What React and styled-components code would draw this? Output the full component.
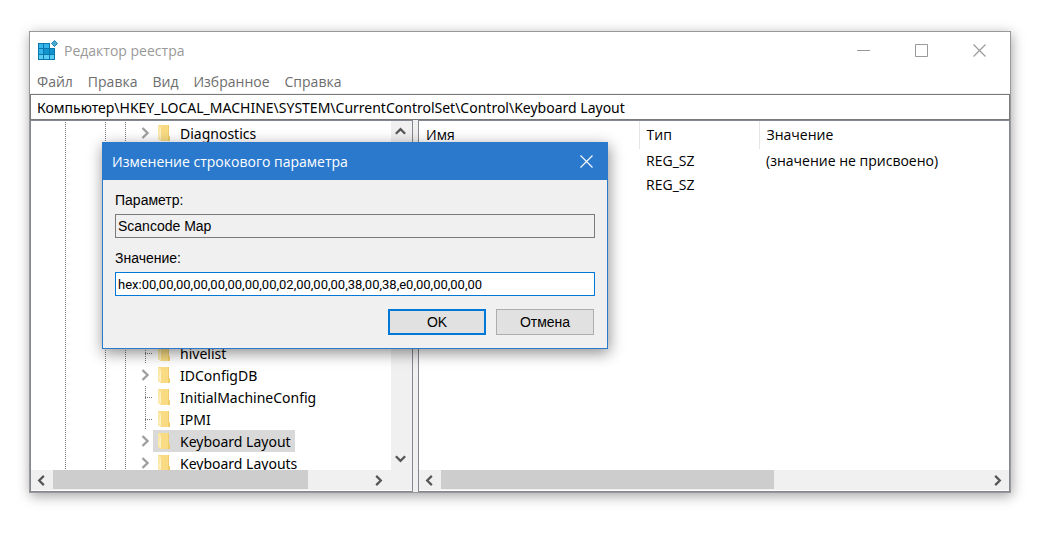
import React, {useState} from "react";
import styled, {createGlobalStyle, css} from "styled-components";

const uiFont = `"Open Sans", "Noto Sans", sans-serif`;
const treeFont = `"Noto Sans", "Open Sans", sans-serif`;
const dialogFont = `"Liberation Sans", Arial, sans-serif`;
const valueFont = `Roboto, "Liberation Sans", sans-serif`;

const GlobalStyle = createGlobalStyle`
  * {
    box-sizing: border-box;
  }
  body {
    margin: 0;
    background: #fff;
    font-family: ${uiFont};
    font-size: 14px;
    color: #000;
  }
  button, input {
    font: inherit;
    color: inherit;
    margin: 0;
    outline: none;
  }
`

const Desktop = styled.div`
  display: flex;
  min-height: 100vh;
  padding: 31px 41px 47px 29px;
`

const Window = styled.div`
  position: relative;
  display: flex;
  flex-direction: column;
  flex: 1;
  min-width: 0;
  border: 1px solid #999;
  background: #fff;
  box-shadow: 1px 3px 12px rgba(0, 0, 0, 0.36);
`

const TitleBar = styled.header`
  display: flex;
  align-items: center;
  height: 38px;
  padding: 0 2px 2px 8px;
`

const Title = styled.h1`
  flex: 1;
  margin: 0 0 0 5px;
  font-size: 14px;
  font-weight: normal;
  color: #999;
`

const IconButton = styled.button`
  display: flex;
  align-items: center;
  justify-content: center;
  width: ${p => p.$width}px;
  height: 36px;
  padding: 0;
  border: none;
  background: none;
  color: ${p => p.$color};
`

const Menu = styled.nav`
  display: flex;
  gap: 15px;
  height: 24px;
  padding: 0 7px;
  border-bottom: 1px solid #f0f0f0;
`

const MenuItem = styled.button`
  padding: 0;
  border: none;
  background: none;
  line-height: 23px;
  color: #6d6d6d;
`

const Address = styled.input`
  width: 100%;
  height: 26px;
  padding: 0 6px;
  border: 1px solid #7a7a7a;
  background: #fff;
  font-family: ${treeFont};
`

const Panes = styled.div`
  flex: 1;
  min-height: 0;
  display: grid;
  grid-template-columns: 11fr 17fr;
  gap: 5px;
  background: #f0f0f0;
`

const Pane = styled.section`
  display: flex;
  flex-direction: column;
  min-width: 0;
  border: 1px solid #828790;
  padding-bottom: 1px;
  background: #fff;
`

const PaneBody = styled.div`
  flex: 1;
  display: flex;
  min-height: 0;
`

const Tree = styled.ul`
  flex: 1 1 0;
  height: 349px;
  margin: 0;
  padding: 1px 0 0;
  overflow: hidden;
  list-style: none;
  font-family: ${treeFont};
`

const dots = `repeating-linear-gradient(#777 0 1px, transparent 1px 2px)`;

const TreeRow = styled.li`
  display: flex;
  height: 22px;
  padding-left: 34px;
`

const Guide = styled.span`
  width: ${p => p.$width}px;
  background: ${dots} left / 1px 100% no-repeat;
`

const Branch = styled.span`
  display: flex;
  align-items: center;
  width: 8px;
  ${p => !p.$open && css`
    background:
      ${dots} left / 1px 100% no-repeat,
      repeating-linear-gradient(90deg, #777 0 1px, transparent 1px 2px) left / 100% 1px no-repeat;
  `}
`

const Expander = styled.button`
  display: flex;
  flex: none;
  margin-left: -7px;
  padding: 0;
  border: none;
  background: none;
  color: #a0a0a0;
`

const Key = styled.span`
  display: flex;
  align-items: center;
  gap: 9px;
  padding: 0 4px 0 5px;
  white-space: nowrap;
  background: ${p => p.$selected ? "#d9d9d9" : "transparent"};
`

const ScrollTrack = styled.div`
  display: flex;
  flex: none;
  flex-direction: ${p => p.$vertical ? "column" : "row"};
  justify-content: space-between;
  ${p => p.$vertical ? "width: 21px; padding-bottom: 2px;" : "height: 20px;"}
  background: #f0f0f0;
`

const ScrollButton = styled.button`
  display: flex;
  flex: none;
  align-items: center;
  justify-content: center;
  width: ${p => p.$narrow ? 20 : 22}px;
  height: 20px;
  padding: 0 2px 0 0;
  border: none;
  background: none;
  color: #555;
`

const ScrollRange = styled.div`
  flex: 1;
`

const ScrollThumb = styled.div`
  width: ${p => p.$size}%;
  height: 19px;
  background: #cdcdcd;
`

const Corner = styled.div`
  width: ${p => p.$size}px;
`

const Values = styled.table`
  width: 100%;
  table-layout: fixed;
  border-collapse: collapse;
  align-self: flex-start;

  th, td {
    height: 24px;
    padding: 0 7px;
    font-weight: normal;
    line-height: 20px;
    text-align: left;
    white-space: nowrap;
  }
  th {
    height: 28px;
    border-left: 1px solid #e5e5e5;
  }
  th:first-child {
    border-left: none;
  }
`

const Dialog = styled.form`
  position: absolute;
  left: 72px;
  top: 110px;
  width: 506px;
  border: 1px solid #2a79cd;
  background: #f0f0f0;
  font-family: ${dialogFont};
  box-shadow: 1px 4px 14px rgba(0, 0, 0, 0.45);
`

const DialogTitle = styled.div`
  display: flex;
  align-items: center;
  justify-content: space-between;
  height: 37px;
  padding-left: 9px;
  background: #2a79cd;
  font-family: ${uiFont};
  color: #fff;
`

const DialogBody = styled.div`
  display: flex;
  flex-direction: column;
  padding: 10px 12px 13px;
`

const Label = styled.label`
  height: 24px;
  line-height: 20px;
`

const Field = styled.input`
  height: 24px;
  margin-bottom: 10px;
  padding: 0 2px;
  border: 1px solid ${p => p.readOnly ? "#7a7a7a" : "#0078d7"};
  background: ${p => p.readOnly ? "#f0f0f0" : "#fff"};
  ${p => p.$narrow && css`
    font-family: ${valueFont};
    font-size: 13px;
  `}
`

const Actions = styled.div`
  display: flex;
  justify-content: flex-end;
  gap: 10px;
  padding: 3px 1px 0 0;
`

const ActionButton = styled.button`
  width: 98px;
  height: 26px;
  padding: 0;
  border: ${p => p.$primary ? "2px solid #0078d7" : "1px solid #adadad"};
  background: #e1e1e1;
`

const paths = {
    left: "M9.5 2 L4.5 7 L9.5 12",
    right: "M4.5 2 L9.5 7 L4.5 12",
    up: "M2 9.5 L7 4.5 L12 9.5",
    down: "M2 4.5 L7 9.5 L12 4.5"
}

const Arrow = ({to, size = 13}) => (
    <svg width={size} height={size} viewBox="0 0 14 14" fill="none" stroke="currentColor" strokeWidth="2.4">
        <path d={paths[to]}/>
    </svg>
)

const Cross = () => (
    <svg width="13" height="13" viewBox="0 0 13 13" stroke="currentColor" strokeWidth="1.1">
        <path d="M.5 .5 L12.5 12.5 M12.5 .5 L.5 12.5"/>
    </svg>
)

const Folder = () => (
    <svg width="13" height="18" viewBox="0 0 13 18">
        <path d="M0 1h11v11l1 1v4H3L0 15z" fill="#f8db83"/>
        <path d="M0 1l3 2v14L0 15z" fill="#fbe8a6"/>
        <path d="M10 1h1v11l1 1v4h-2z" fill="#f0cc68"/>
        <path d="M1 12l2 5V3z" fill="#fdf1c8"/>
    </svg>
)

const RegistryIcon = () => (
    <svg width="21" height="20" viewBox="0 0 21 20">
        <path d="M0 3h12v5h5v12H0z" fill="#0b78ad"/>
        <path d="M1 4h4v4H1zM6 4h5v4H6zM1 9h4v5H1z" fill="#35b5ea"/>
        <path d="M6 9h5v5H6zM12 9h4v5h-4z" fill="#1193cd"/>
        <path d="M1 15h4v4H1zM6 15h5v4H6zM12 15h4v4h-4z" fill="#5bcdf5"/>
        <path d="M16.500 .5 L19.500 3.500 L16.500 6.500 L13.500 3.500z" fill="#4aaad4" stroke="#2585b3"/>
    </svg>
)

const hiddenRows = Array.from({length: 9}, () => ({name: "", hidden: true}));

const keys = [
    {name: "Diagnostics", open: true},
    ...hiddenRows,
    {name: "hivelist"},
    {name: "IDConfigDB", open: true},
    {name: "InitialMachineConfig"},
    {name: "IPMI"},
    {name: "Keyboard Layout", open: true},
    {name: "Keyboard Layouts", open: true}
]

const HorizontalScroll = ({thumb, corner = 0}) => (
    <ScrollTrack>
        <ScrollButton aria-label="Влево"><Arrow to="left"/></ScrollButton>
        <ScrollRange><ScrollThumb $size={thumb}/></ScrollRange>
        <ScrollButton aria-label="Вправо"><Arrow to="right"/></ScrollButton>
        <Corner $size={corner}/>
    </ScrollTrack>
)

const KeyTree = () => {
    const [selected, setSelected] = useState("Keyboard Layout")

    return (
        <Pane>
            <PaneBody>
                <Tree>
                    {keys.map((key, i) => (
                        <TreeRow key={i}>
                            <Guide $width={40}/>
                            <Guide $width={20}/>
                            <Guide $width={20}/>
                            <Branch $open={key.open}>
                                {key.open && <Expander aria-label={key.name}><Arrow to="right" size={14}/></Expander>}
                            </Branch>
                            {!key.hidden &&
                                <Key $selected={key.name === selected} onClick={() => setSelected(key.name)}>
                                    <Folder/>
                                    {key.name}
                                </Key>}
                        </TreeRow>
                    ))}
                </Tree>
                <ScrollTrack $vertical>
                    <ScrollButton $narrow aria-label="Вверх"><Arrow to="up"/></ScrollButton>
                    <ScrollButton $narrow aria-label="Вниз"><Arrow to="down"/></ScrollButton>
                </ScrollTrack>
            </PaneBody>
            <HorizontalScroll thumb={81} corner={22}/>
        </Pane>
    )
}

const ValueList = () => (
    <Pane>
        <PaneBody>
            <Values>
                <colgroup>
                    <col style={{width: "220px"}}/>
                    <col style={{width: "120px"}}/>
                    <col/>
                </colgroup>
                <thead>
                    <tr>
                        <th>Имя</th>
                        <th>Тип</th>
                        <th>Значение</th>
                    </tr>
                </thead>
                <tbody>
                    <tr>
                        <td/>
                        <td>REG_SZ</td>
                        <td>(значение не присвоено)</td>
                    </tr>
                    <tr>
                        <td/>
                        <td>REG_SZ</td>
                        <td/>
                    </tr>
                </tbody>
            </Values>
        </PaneBody>
        <HorizontalScroll thumb={61}/>
    </Pane>
)

const EditDialog = () => {
    const [value, setValue] = useState("hex:00,00,00,00,00,00,00,00,02,00,00,00,38,00,38,e0,00,00,00,00")

    return (
        <Dialog onSubmit={e => e.preventDefault()}>
            <DialogTitle>
                Изменение строкового параметра
                <IconButton type="button" $width={42} $color="#fff" aria-label="Закрыть"><Cross/></IconButton>
            </DialogTitle>
            <DialogBody>
                <Label htmlFor="param">Параметр:</Label>
                <Field id="param" readOnly value="Scancode Map"/>
                <Label htmlFor="value">Значение:</Label>
                <Field id="value" $narrow value={value} onChange={e => setValue(e.target.value)}/>
                <Actions>
                    <ActionButton $primary>OK</ActionButton>
                    <ActionButton type="button">Отмена</ActionButton>
                </Actions>
            </DialogBody>
        </Dialog>
    )
}

export default function App() {
    const [path, setPath] = useState("Компьютер\\HKEY_LOCAL_MACHINE\\SYSTEM\\CurrentControlSet\\Control\\Keyboard Layout")

    return (
        <Desktop>
            <GlobalStyle/>
            <Window>
                <TitleBar>
                    <RegistryIcon/>
                    <Title>Редактор реестра</Title>
                    <IconButton $width={58} $color="#999" aria-label="Свернуть">
                        <svg width="13" height="13" stroke="currentColor"><path d="M0 6.500 H13"/></svg>
                    </IconButton>
                    <IconButton $width={58} $color="#999" aria-label="Развернуть">
                        <svg width="13" height="13" stroke="currentColor" fill="none"><path d="M.5 .5 H12.500 V12.500 H.5z"/></svg>
                    </IconButton>
                    <IconButton $width={58} $color="#999" aria-label="Закрыть"><Cross/></IconButton>
                </TitleBar>
                <Menu>
                    <MenuItem>Файл</MenuItem>
                    <MenuItem>Правка</MenuItem>
                    <MenuItem>Вид</MenuItem>
                    <MenuItem>Избранное</MenuItem>
                    <MenuItem>Справка</MenuItem>
                </Menu>
                <Address aria-label="Путь" value={path} onChange={e => setPath(e.target.value)}/>
                <Panes>
                    <KeyTree/>
                    <ValueList/>
                </Panes>
                <EditDialog/>
            </Window>
        </Desktop>
    )
}
